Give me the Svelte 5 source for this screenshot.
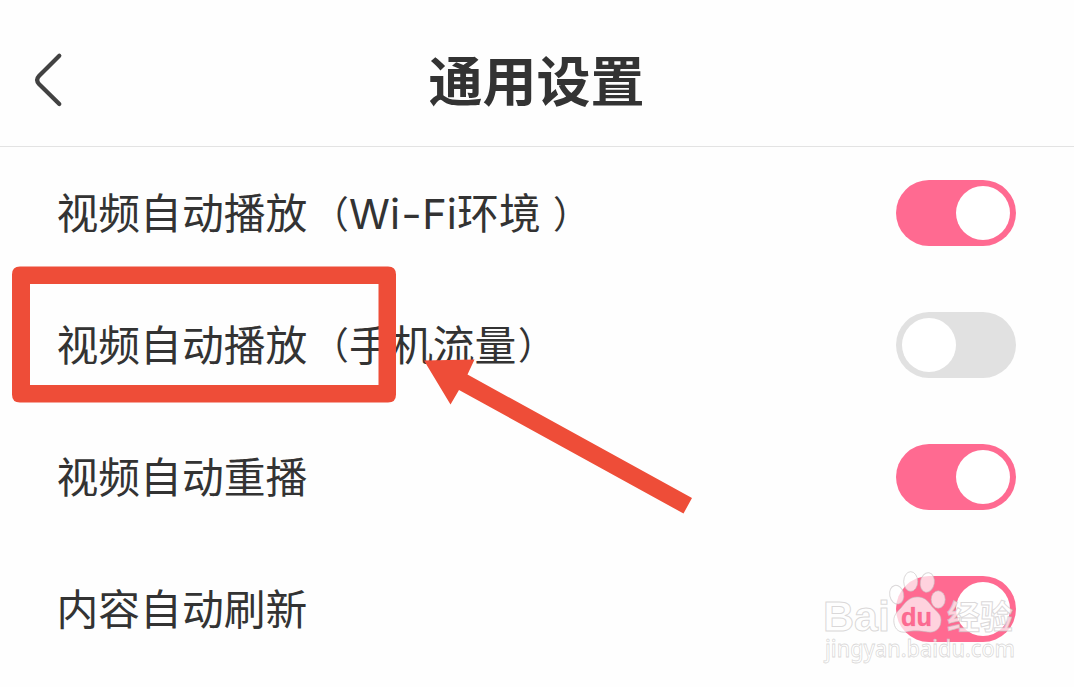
<script>
  const settings = [
    { title: '视频自动播放', latin: true, on: true },
    { title: '视频自动播放', rest: '手机流量', on: false },
    { title: '视频自动重播', on: true },
    { title: '内容自动刷新', on: true }
  ];
</script>

<main>
  <header>
    <svg class="back" width="40" height="64" viewBox="0 0 40 64" aria-hidden="true">
      <path d="M27.3 8.7 7 29Q3.3 33 7 37L27.3 57.1" />
    </svg>
    <h1>通用设置</h1>
  </header>

  <section>
    {#each settings as item}
      <div class="row">
        <div class="label">
          {item.title}{#if item.latin}<span class="paren open">（</span><span class="latin">Wi<span class="dash">-</span>Fi</span>环境<span class="paren spaced">）</span>{/if}{#if item.rest}<span class="paren open">（</span>{item.rest}<span class="paren">）</span>{/if}
        </div>
        <div class="switch" class:on={item.on}><span class="knob"></span></div>
      </div>
    {/each}
  </section>

  <svg class="overlay" width="1074" height="687" viewBox="0 0 1074 687" aria-hidden="true">
    <g fill="#ee4d38">
      <path fill-rule="evenodd" d="M20 266.5H388Q396 266.5 396 274.5V394.5Q396 402.5 388 402.5H20Q12 402.5 12 394.5V274.5Q12 266.5 20 266.5ZM30 284V385H378.5V284Z" />
      <path d="M424 360.5 474.5 359.5 467.5 374.5 692 498 683.5 513.5 459 390 450.5 404.5Z" />
    </g>
    <g class="mark">
      <text x="823" y="631" class="bai" textLength="67" lengthAdjust="spacingAndGlyphs">Bai</text>
      <g class="paw">
        <ellipse cx="896.7" cy="594.7" rx="7" ry="9.5" transform="rotate(-12 896.7 594.7)" />
        <ellipse cx="910.7" cy="581.5" rx="7" ry="9.8" />
        <ellipse cx="927.3" cy="582.5" rx="7" ry="9.8" transform="rotate(10 927.3 582.5)" />
        <ellipse cx="938.2" cy="599.5" rx="7" ry="8.7" />
        <path d="M917 597C909 597 905 603 901 608C896 613 893 616 894 623C895 630 900 633 906 632C914 630 920 631 928 632C936 633 941 628 941 620C941 613 935 611 930 604C926 599 923 597 917 597Z" />
      </g>
      <text x="901" y="626" class="du" textLength="31" lengthAdjust="spacingAndGlyphs">du</text>
      <text x="947" y="629" class="jing" textLength="66">经验</text>
      <text x="825" y="657" class="url" textLength="190" lengthAdjust="spacingAndGlyphs">jingyan.baidu.com</text>
    </g>
  </svg>
</main>

<style>
  :global(body) {
    margin: 0;
    background: #fefefe;
  }
  main {
    position: relative;
    width: 1074px;
    height: 687px;
    overflow: hidden;
    background: #fefefe;
    color: #333;
    font-family: "Noto Sans CJK SC", sans-serif;
  }
  header {
    box-sizing: border-box;
    height: 147px;
    padding: 12px 33px 0 32px;
    border-bottom: 1px solid #e3e3e3;
    display: grid;
    grid-template-columns: 40px 1fr 40px;
    align-items: center;
  }
  .back path {
    fill: none;
    stroke: #424242;
    stroke-width: 4.2;
    stroke-linecap: round;
  }
  h1 {
    margin: 0;
    text-align: center;
    font-size: 54px;
    line-height: 80px;
    font-weight: 700;
  }
  .row {
    box-sizing: border-box;
    height: 132px;
    padding: 0 58px 0 56.5px;
    display: flex;
    align-items: center;
    justify-content: space-between;
  }
  .label {
    padding-bottom: 4px;
    font-size: 41.8px;
    line-height: 60px;
    white-space: nowrap;
  }
  .paren {
    display: inline-block;
    transform: translateX(2px) scale(0.88, 0.9);
    transform-origin: 0 55%;
  }
  .paren.open {
    transform: scale(0.88, 0.9);
    transform-origin: 100% 55%;
  }
  .latin {
    display: inline-block;
    width: 108px;
    box-sizing: border-box;
    font-family: Inter, sans-serif;
    font-size: 41.5px;
    line-height: 40px;
  }
  .dash {
    display: inline-block;
    margin: 0 1.5px;
    transform: scaleX(1.08);
  }
  .paren.spaced {
    margin-left: 10px;
  }
  .switch {
    box-sizing: border-box;
    width: 120px;
    height: 66px;
    padding: 6px;
    border-radius: 33px;
    background: #e1e1e1;
    display: flex;
  }
  .switch.on {
    justify-content: flex-end;
    background: #ff6a91;
  }
  .knob {
    width: 54px;
    height: 54px;
    border-radius: 50%;
    background: #fff;
  }
  .overlay {
    position: absolute;
    inset: 0;
  }
  .mark {
    fill: rgba(255, 255, 255, 0.7);
    stroke: rgba(195, 190, 192, 0.6);
    stroke-width: 1;
  }
  .bai {
    font: 700 42px "Liberation Sans", sans-serif;
  }
  .du {
    font: 700 26px "Liberation Sans", sans-serif;
    fill: #ff6a91;
    stroke: rgba(225, 90, 130, 0.4);
    stroke-width: 0.6;
  }
  .jing {
    font: 700 33px "Noto Sans CJK SC", sans-serif;
  }
  .url {
    font: 500 23px "Noto Sans", sans-serif;
    stroke-width: 0.8;
  }
</style>
